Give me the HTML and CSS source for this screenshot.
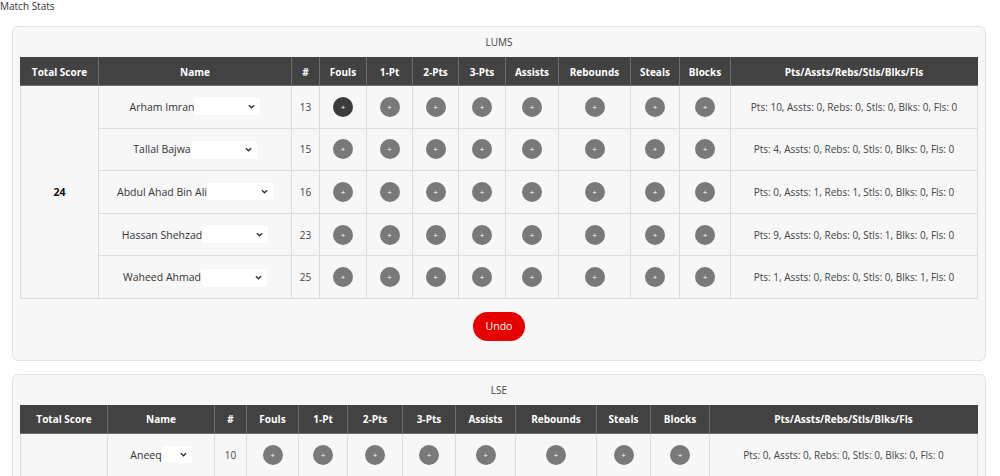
FILE: index.html
```html
<!DOCTYPE html>
<html lang="en">
<head>
    <meta charset="UTF-8">
    <meta name="viewport" content="width=device-width, initial-scale=1.0">
    <title>Match Stats</title>
    <link rel="stylesheet" href="styles.css">
</head>
<body>
    <div class="page-title">Match Stats</div>

    <div class="team-card team-lums">
        <div class="team-name">LUMS</div>
        <table class="stats">
            <colgroup>
                <col class="c-total"><col class="c-name"><col class="c-num"><col class="c-fouls"><col class="c-p1"><col class="c-p2"><col class="c-p3"><col class="c-ast"><col class="c-reb"><col class="c-stl"><col class="c-blk"><col class="c-sum">
            </colgroup>
            <thead>
                <tr>
                    <th>Total Score</th><th>Name</th><th>#</th><th>Fouls</th><th>1-Pt</th><th>2-Pts</th><th>3-Pts</th><th>Assists</th><th>Rebounds</th><th>Steals</th><th>Blocks</th><th>Pts/Assts/Rebs/Stls/Blks/Fls</th>
                </tr>
            </thead>
            <tbody>
                <tr>
                    <td rowspan="5" class="total">24</td>
                    <td><span class="player-select"><span class="player">Arham Imran</span><span class="drop"><svg viewBox="0 0 8 5"><path d="M1 1l3 3 3-3"/></svg></span></span></td>
                    <td>13</td>
                    <td><button class="add active">+</button></td>
                    <td><button class="add">+</button></td>
                    <td><button class="add">+</button></td>
                    <td><button class="add">+</button></td>
                    <td><button class="add">+</button></td>
                    <td><button class="add">+</button></td>
                    <td><button class="add">+</button></td>
                    <td><button class="add">+</button></td>
                    <td>Pts: 10, Assts: 0, Rebs: 0, Stls: 0, Blks: 0, Fls: 0</td>
                </tr>
                <tr>
                    <td><span class="player-select"><span class="player">Tallal Bajwa</span><span class="drop"><svg viewBox="0 0 8 5"><path d="M1 1l3 3 3-3"/></svg></span></span></td>
                    <td>15</td>
                    <td><button class="add">+</button></td>
                    <td><button class="add">+</button></td>
                    <td><button class="add">+</button></td>
                    <td><button class="add">+</button></td>
                    <td><button class="add">+</button></td>
                    <td><button class="add">+</button></td>
                    <td><button class="add">+</button></td>
                    <td><button class="add">+</button></td>
                    <td>Pts: 4, Assts: 0, Rebs: 0, Stls: 0, Blks: 0, Fls: 0</td>
                </tr>
                <tr>
                    <td><span class="player-select"><span class="player">Abdul Ahad Bin Ali</span><span class="drop"><svg viewBox="0 0 8 5"><path d="M1 1l3 3 3-3"/></svg></span></span></td>
                    <td>16</td>
                    <td><button class="add">+</button></td>
                    <td><button class="add">+</button></td>
                    <td><button class="add">+</button></td>
                    <td><button class="add">+</button></td>
                    <td><button class="add">+</button></td>
                    <td><button class="add">+</button></td>
                    <td><button class="add">+</button></td>
                    <td><button class="add">+</button></td>
                    <td>Pts: 0, Assts: 1, Rebs: 1, Stls: 0, Blks: 0, Fls: 0</td>
                </tr>
                <tr>
                    <td><span class="player-select"><span class="player">Hassan Shehzad</span><span class="drop"><svg viewBox="0 0 8 5"><path d="M1 1l3 3 3-3"/></svg></span></span></td>
                    <td>23</td>
                    <td><button class="add">+</button></td>
                    <td><button class="add">+</button></td>
                    <td><button class="add">+</button></td>
                    <td><button class="add">+</button></td>
                    <td><button class="add">+</button></td>
                    <td><button class="add">+</button></td>
                    <td><button class="add">+</button></td>
                    <td><button class="add">+</button></td>
                    <td>Pts: 9, Assts: 0, Rebs: 0, Stls: 1, Blks: 0, Fls: 0</td>
                </tr>
                <tr>
                    <td><span class="player-select"><span class="player">Waheed Ahmad</span><span class="drop"><svg viewBox="0 0 8 5"><path d="M1 1l3 3 3-3"/></svg></span></span></td>
                    <td>25</td>
                    <td><button class="add">+</button></td>
                    <td><button class="add">+</button></td>
                    <td><button class="add">+</button></td>
                    <td><button class="add">+</button></td>
                    <td><button class="add">+</button></td>
                    <td><button class="add">+</button></td>
                    <td><button class="add">+</button></td>
                    <td><button class="add">+</button></td>
                    <td>Pts: 1, Assts: 0, Rebs: 0, Stls: 0, Blks: 1, Fls: 0</td>
                </tr>
            </tbody>
        </table>
        <div class="actions">
            <button class="undo">Undo</button>
        </div>
    </div>

    <div class="team-card team-lse">
        <div class="team-name">LSE</div>
        <table class="stats">
            <colgroup>
                <col class="c-total"><col class="c-name"><col class="c-num"><col class="c-fouls"><col class="c-p1"><col class="c-p2"><col class="c-p3"><col class="c-ast"><col class="c-reb"><col class="c-stl"><col class="c-blk"><col class="c-sum">
            </colgroup>
            <thead>
                <tr>
                    <th>Total Score</th><th>Name</th><th>#</th><th>Fouls</th><th>1-Pt</th><th>2-Pts</th><th>3-Pts</th><th>Assists</th><th>Rebounds</th><th>Steals</th><th>Blocks</th><th>Pts/Assts/Rebs/Stls/Blks/Fls</th>
                </tr>
            </thead>
            <tbody>
                <tr>
                    <td rowspan="5" class="total">0</td>
                    <td><span class="player-select short"><span class="player">Aneeq</span><span class="drop"><svg viewBox="0 0 8 5"><path d="M1 1l3 3 3-3"/></svg></span></span></td>
                    <td>10</td>
                    <td><button class="add">+</button></td>
                    <td><button class="add">+</button></td>
                    <td><button class="add">+</button></td>
                    <td><button class="add">+</button></td>
                    <td><button class="add">+</button></td>
                    <td><button class="add">+</button></td>
                    <td><button class="add">+</button></td>
                    <td><button class="add">+</button></td>
                    <td>Pts: 0, Assts: 0, Rebs: 0, Stls: 0, Blks: 0, Fls: 0</td>
                </tr>
                <tr>
                    <td><span class="player-select short"><span class="player">Bilal</span><span class="drop"><svg viewBox="0 0 8 5"><path d="M1 1l3 3 3-3"/></svg></span></span></td>
                    <td>12</td>
                    <td><button class="add">+</button></td>
                    <td><button class="add">+</button></td>
                    <td><button class="add">+</button></td>
                    <td><button class="add">+</button></td>
                    <td><button class="add">+</button></td>
                    <td><button class="add">+</button></td>
                    <td><button class="add">+</button></td>
                    <td><button class="add">+</button></td>
                    <td>Pts: 0, Assts: 0, Rebs: 0, Stls: 0, Blks: 0, Fls: 0</td>
                </tr>
                <tr>
                    <td><span class="player-select short"><span class="player">Hamza</span><span class="drop"><svg viewBox="0 0 8 5"><path d="M1 1l3 3 3-3"/></svg></span></span></td>
                    <td>14</td>
                    <td><button class="add">+</button></td>
                    <td><button class="add">+</button></td>
                    <td><button class="add">+</button></td>
                    <td><button class="add">+</button></td>
                    <td><button class="add">+</button></td>
                    <td><button class="add">+</button></td>
                    <td><button class="add">+</button></td>
                    <td><button class="add">+</button></td>
                    <td>Pts: 0, Assts: 0, Rebs: 0, Stls: 0, Blks: 0, Fls: 0</td>
                </tr>
                <tr>
                    <td><span class="player-select short"><span class="player">Umar</span><span class="drop"><svg viewBox="0 0 8 5"><path d="M1 1l3 3 3-3"/></svg></span></span></td>
                    <td>21</td>
                    <td><button class="add">+</button></td>
                    <td><button class="add">+</button></td>
                    <td><button class="add">+</button></td>
                    <td><button class="add">+</button></td>
                    <td><button class="add">+</button></td>
                    <td><button class="add">+</button></td>
                    <td><button class="add">+</button></td>
                    <td><button class="add">+</button></td>
                    <td>Pts: 0, Assts: 0, Rebs: 0, Stls: 0, Blks: 0, Fls: 0</td>
                </tr>
                <tr>
                    <td><span class="player-select short"><span class="player">Saad</span><span class="drop"><svg viewBox="0 0 8 5"><path d="M1 1l3 3 3-3"/></svg></span></span></td>
                    <td>30</td>
                    <td><button class="add">+</button></td>
                    <td><button class="add">+</button></td>
                    <td><button class="add">+</button></td>
                    <td><button class="add">+</button></td>
                    <td><button class="add">+</button></td>
                    <td><button class="add">+</button></td>
                    <td><button class="add">+</button></td>
                    <td><button class="add">+</button></td>
                    <td>Pts: 0, Assts: 0, Rebs: 0, Stls: 0, Blks: 0, Fls: 0</td>
                </tr>
            </tbody>
        </table>
        <div class="actions">
            <button class="undo">Undo</button>
        </div>
    </div>
</body>
</html>
```

FILE: styles.css
```css
body {
    font-family: "Segoe UI", "Open Sans", sans-serif;
    font-size: 10px;
    color: #333;
    margin: 0;
    background: #fff;
}
.page-title {
    line-height: 13px;
    color: #333;
}
.team-card {
    background: #f7f7f7;
    border: 1px solid #e2e2e2;
    border-radius: 6px;
    margin: 13px 14px 0 12px;
    padding: 7px 7px 19px;
}
.team-card + .team-card {
    margin-top: 13px;
}
.team-name {
    text-align: center;
    color: #444;
    line-height: 16px;
    margin-bottom: 7px;
}
.stats {
    width: 100%;
    table-layout: fixed;
    border-collapse: collapse;
    text-align: center;
}
.stats th {
    background: #424242;
    color: #fff;
    font-weight: 700;
    height: 27px;
    padding: 0;
    border: 1px solid #6e6e6e;
    border-top-color: #424242;
}
.stats th:first-child { border-left-color: #424242; }
.stats th:last-child { border-right-color: #424242; }
.stats td {
    height: 41.6px;
    padding: 0;
    border: 1px solid #dcdcdc;
    color: #444;
}
.stats td.total {
    font-weight: 700;
    color: #111;
    font-size: 10.5px;
}

/* column widths */
.team-lums .c-total { width: 78px; }
.team-lums .c-name { width: 193px; }
.team-lums .c-num { width: 28px; }
.team-lums .c-fouls { width: 47px; }
.team-lums .c-p1 { width: 46px; }
.team-lums .c-p2 { width: 46px; }
.team-lums .c-p3 { width: 47px; }
.team-lums .c-ast { width: 53px; }
.team-lums .c-reb { width: 72px; }
.team-lums .c-stl { width: 49px; }
.team-lums .c-blk { width: 51px; }

.team-lse .c-total { width: 87px; }
.team-lse .c-name { width: 107px; }
.team-lse .c-num { width: 32px; }
.team-lse .c-fouls { width: 52px; }
.team-lse .c-p1 { width: 49px; }
.team-lse .c-p2 { width: 55px; }
.team-lse .c-p3 { width: 53px; }
.team-lse .c-ast { width: 60px; }
.team-lse .c-reb { width: 81px; }
.team-lse .c-stl { width: 54px; }
.team-lse .c-blk { width: 59px; }

.player-select {
    display: inline-flex;
    align-items: center;
    height: 17px;
    vertical-align: middle;
}
.player {
    color: #333;
    font-size: 10.5px;
}
.drop {
    display: flex;
    align-items: center;
    justify-content: flex-end;
    background: #fff;
    width: 66px;
    height: 17px;
    box-sizing: border-box;
    padding-right: 5px;
}
.drop svg {
    width: 7px;
    height: 5px;
    fill: none;
    stroke: #333;
    stroke-width: 1.6;
}
.player-select.short .drop {
    width: 30px;
}

.add {
    width: 20px;
    height: 20px;
    border-radius: 50%;
    border: none;
    padding: 0;
    background: #797979;
    color: #fff;
    font-family: inherit;
    font-size: 8px;
    line-height: 20px;
    vertical-align: middle;
    cursor: pointer;
}
.add.active {
    background: #3c3c3c;
}

.actions {
    text-align: center;
    margin-top: 13px;
}
.undo {
    background: #e60000;
    color: #fff;
    border: none;
    border-radius: 15px;
    width: 52px;
    height: 29px;
    font-family: inherit;
    font-size: 10.5px;
    cursor: pointer;
}
```
